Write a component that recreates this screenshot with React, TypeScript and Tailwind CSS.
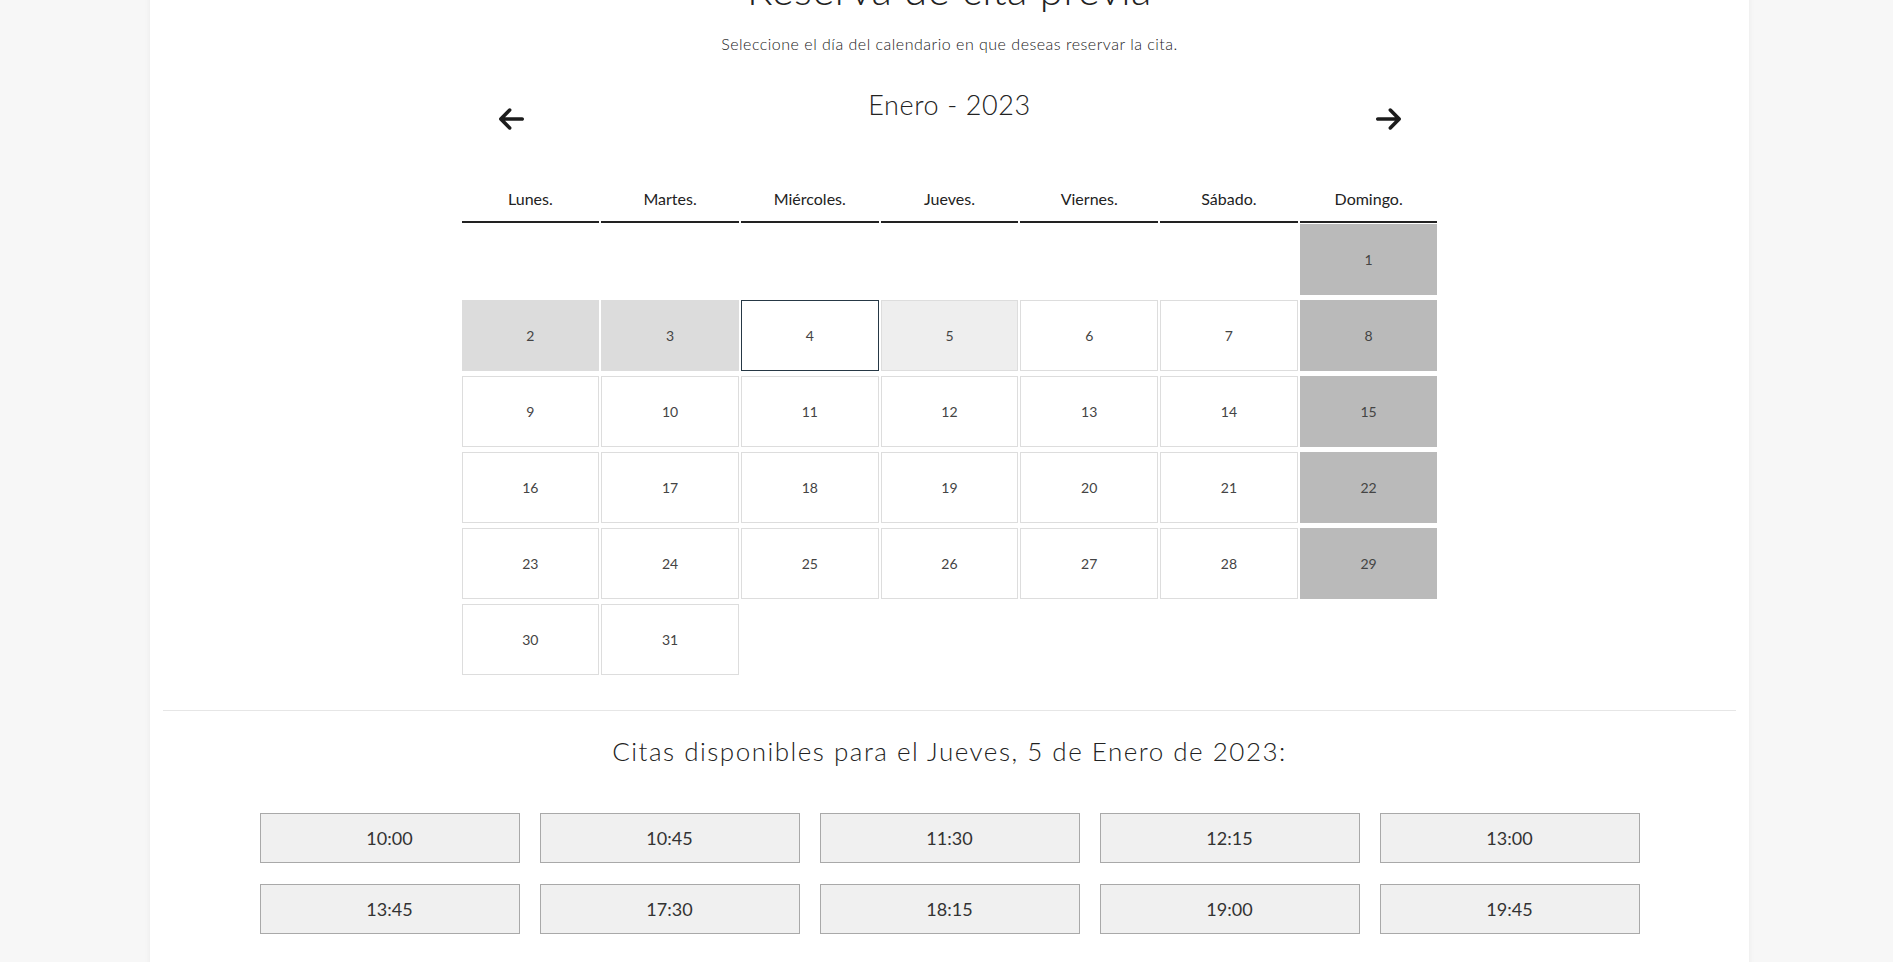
import React from "react";

const font = { fontFamily: "Lato, 'Noto Sans', sans-serif" };

const days = ["Lunes.", "Martes.", "Miércoles.", "Jueves.", "Viernes.", "Sábado.", "Domingo."];
const times = ["10:00", "10:45", "11:30", "12:15", "13:00", "13:45", "17:30", "18:15", "19:00", "19:45"];

function ArrowLeft() {
  return (
    <svg viewBox="0 64 448 384" className="w-[25px] h-[22px]" fill="#1c1c1c">
      <path d="M9.4 233.4c-12.5 12.5-12.5 32.8 0 45.3l160 160c12.5 12.5 32.8 12.5 45.3 0s12.5-32.8 0-45.3L109.2 288 416 288c17.7 0 32-14.3 32-32s-14.3-32-32-32l-306.7 0L214.6 118.6c12.5-12.5 12.5-32.8 0-45.3s-32.8-12.5-45.3 0l-160 160z" />
    </svg>
  );
}

function ArrowRight() {
  return (
    <svg viewBox="0 64 448 384" className="w-[25px] h-[22px]" fill="#1c1c1c">
      <path d="M438.6 278.6c12.5-12.5 12.5-32.8 0-45.3l-160-160c-12.5-12.5-32.8-12.5-45.3 0s-12.5 32.8 0 45.3L338.8 224 32 224c-17.7 0-32 14.3-32 32s14.3 32 32 32l306.7 0L233.4 393.4c-12.5 12.5-12.5 32.8 0 45.3s32.8 12.5 45.3 0l160-160z" />
    </svg>
  );
}

function dayClass(d: number) {
  if (d % 7 === 1) return "bg-[#bababa] border-[#bababa]"; // domingos
  if (d === 2 || d === 3) return "bg-[#dcdcdc] border-[#dcdcdc]";
  if (d === 4) return "bg-white border-[#263845]";
  if (d === 5) return "bg-[#eeeeee] border-[#dddddd]";
  return "bg-white border-[#dddddd]";
}

export default function App() {
  const cells: (number | null)[] = [null, null, null, null, null, null];
  for (let d = 1; d <= 31; d++) cells.push(d);

  return (
    <div className="min-h-screen bg-[#f7f7f7] overflow-hidden" style={font}>
      <div className="ml-[150px] w-[1599px] min-h-screen bg-white shadow-[0_0_6px_rgba(0,0,0,0.06)] px-[13px] pb-10">
        <h1 className="text-[42px] leading-[50px] tracking-[0.5px] font-light text-center text-[#222] -mt-[36px]">
          Reserva de cita previa
        </h1>
        <p className="mt-[20px] text-[16px] leading-[20px] tracking-[0.5px] font-light text-center text-[#1a1a1a]">
          Seleccione el día del calendario en que deseas reservar la cita.
        </p>

        <div className="w-[976px] mx-auto">
          <div className="mt-[34px] flex justify-between items-start px-[37px]">
            <button className="mt-[20px]">
              <ArrowLeft />
            </button>
            <h2 className="text-[27px] leading-[34px] tracking-[0.6px] font-light text-[#222]">Enero - 2023</h2>
            <button className="mt-[20px]">
              <ArrowRight />
            </button>
          </div>

          <div className="mt-[59px] grid grid-cols-7 gap-x-[2px]">
            {days.map((d) => (
              <div key={d} className="text-center text-[16px] leading-[20px] text-[#222] pb-[12px] border-b-2 border-[#222]">
                {d}
              </div>
            ))}
          </div>

          <div className="mt-[1px] grid grid-cols-7 gap-x-[2px] gap-y-[5px]">
            {cells.map((d, i) =>
              d === null ? (
                <div key={i} className="h-[71px]" />
              ) : (
                <div
                  key={i}
                  className={`h-[71px] border flex items-center justify-center text-[14px] text-[#444] ${dayClass(d)}`}
                >
                  {d}
                </div>
              )
            )}
          </div>
        </div>

        <hr className="mt-[35px] border-0 border-t border-[#e6e6e6]" />

        <h3 className="mt-[25px] text-[26px] leading-[30px] tracking-[1.5px] font-light text-center text-[#222]">
          Citas disponibles para el Jueves, 5 de Enero de 2023:
        </h3>

        <div className="mt-[47px] w-[1380px] mx-auto grid grid-cols-5 gap-x-[20px] gap-y-[21px]">
          {times.map((t) => (
            <button
              key={t}
              className="h-[50px] bg-[#f0f0f0] border border-[#a9a9a9] text-[18px] text-[#333]"
            >
              {t}
            </button>
          ))}
        </div>
      </div>
    </div>
  );
}
